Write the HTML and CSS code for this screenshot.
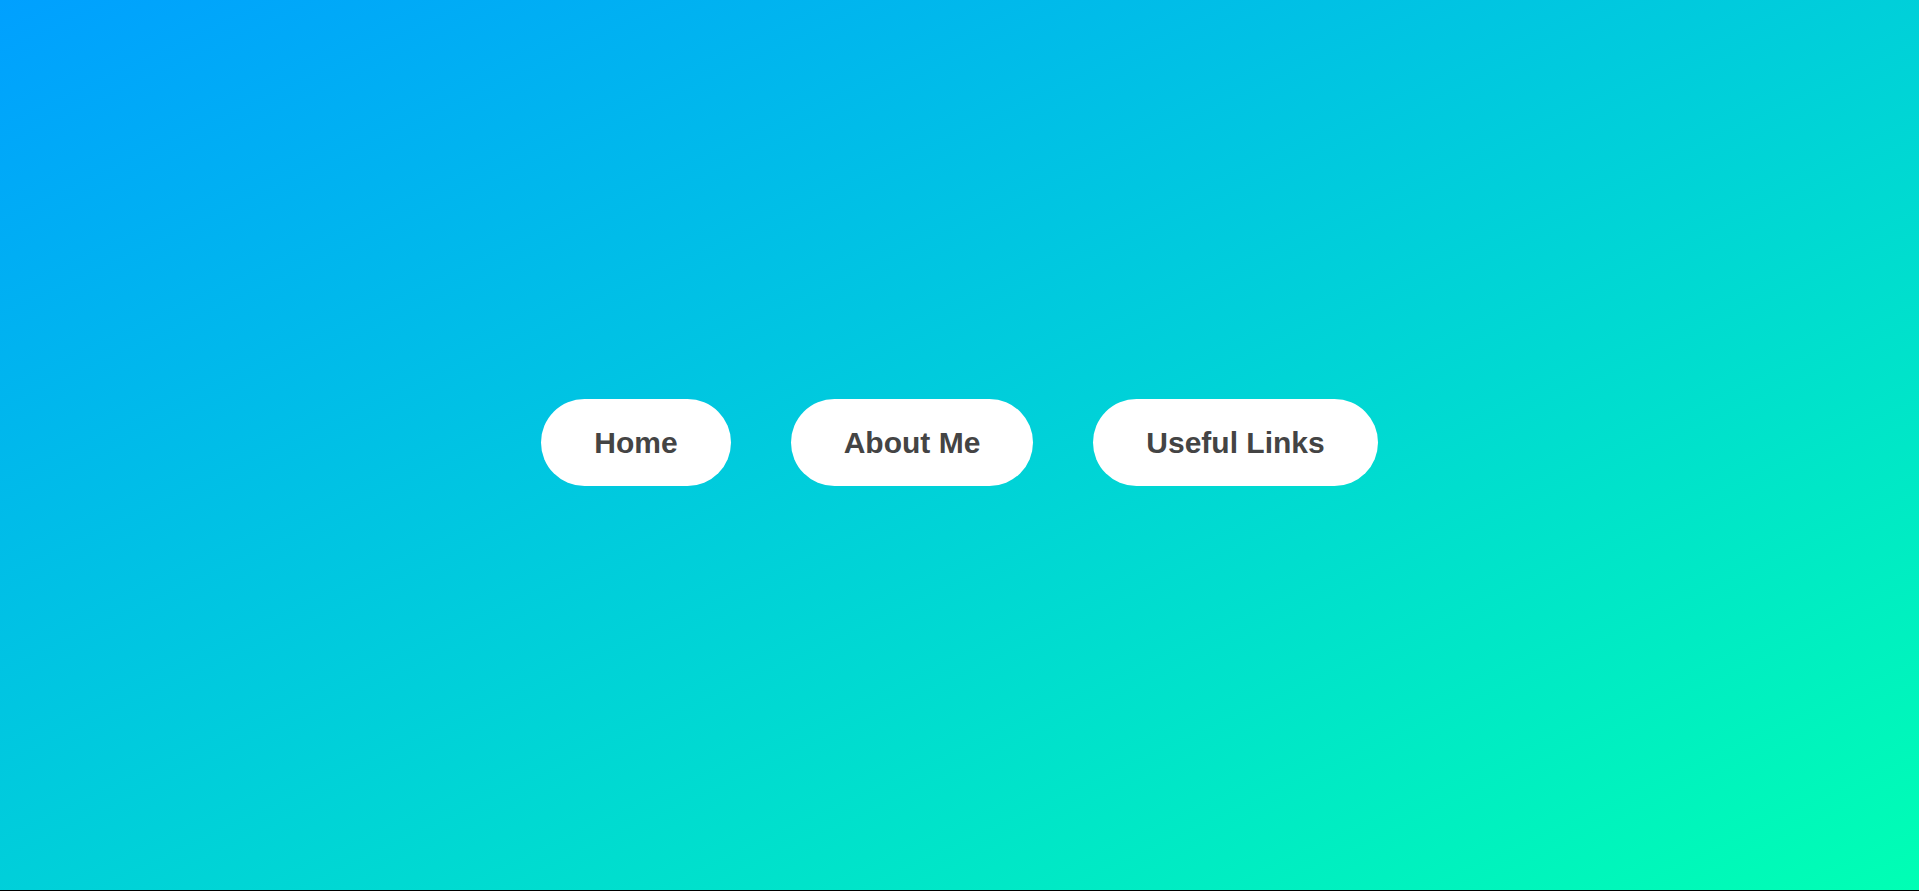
FILE: index.html
```html
<!DOCTYPE html>
<html lang="en">
<head>
<meta charset="utf-8">
<title>Nav</title>
<link rel="stylesheet" href="styles.css">
</head>
<body>
<div class="page">
  <nav class="nav">
    <a class="pill" href="#">Home</a>
    <a class="pill" href="#">About Me</a>
    <a class="pill" href="#">Useful Links</a>
  </nav>
</div>
</body>
</html>
```

FILE: styles.css
```css
html {
  background: #000;
  margin: 0;
  padding: 0;
}
body {
  margin: 0;
  padding: 0;
  font-family: "Liberation Sans", Arial, sans-serif;
}
.page {
  height: 890px;
  box-sizing: border-box;
  padding-bottom: 5px;
  background: linear-gradient(to bottom right, #00a0ff, #00ffb4);
  display: flex;
  align-items: center;
  justify-content: center;
}
.nav {
  display: flex;
  gap: 60px;
}
.pill {
  display: flex;
  align-items: center;
  justify-content: center;
  height: 87px;
  padding: 0 53px;
  box-sizing: border-box;
  background: #fff;
  border-radius: 44px;
  color: #444;
  font-weight: bold;
  font-size: 30px;
  text-decoration: none;
  white-space: nowrap;
}
```
